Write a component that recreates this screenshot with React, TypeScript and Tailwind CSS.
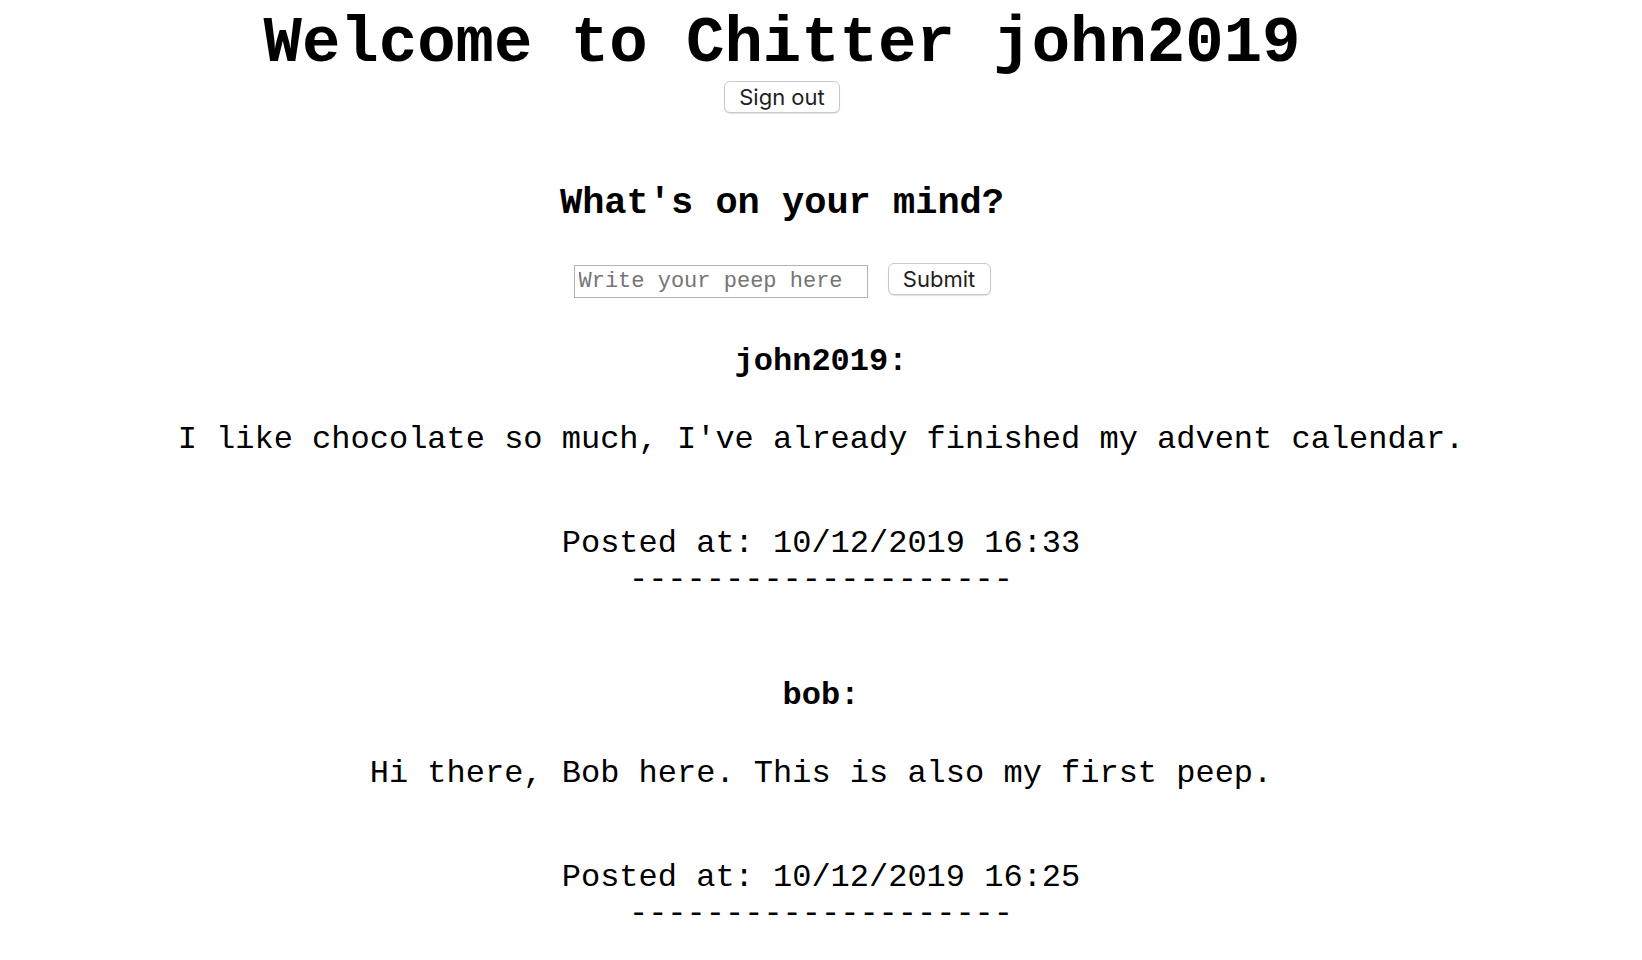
import React from "react";

type Peep = { author: string; text: string; time: string };

const peeps: Peep[] = [
  {
    author: "john2019",
    text: "I like chocolate so much, I've already finished my advent calendar.",
    time: "10/12/2019 16:33",
  },
  {
    author: "bob",
    text: "Hi there, Bob here. This is also my first peep.",
    time: "10/12/2019 16:25",
  },
];

function PeepItem({ peep, first }: { peep: Peep; first: boolean }) {
  return (
    <div className={`flex flex-col items-center ${first ? "mt-[46px]" : "mt-[80px]"}`}>
      <p className="font-bold text-[32px] leading-[36px]">{peep.author}:</p>
      <p className="mt-[42px] text-[32px] leading-[36px] whitespace-pre">{peep.text}</p>
      <p className="mt-[68px] text-[32px] leading-[36px] text-center whitespace-pre">
        Posted at: {peep.time}
        <br />
        --------------------
      </p>
    </div>
  );
}

export default function App() {
  return (
    <div className="min-h-[960px] bg-white text-black font-['Liberation_Mono','Courier_New',monospace]">
      <div className="flex flex-col items-center pr-[78px]">
        <h1 className="mt-[8px] font-bold text-[64px] leading-[72px] whitespace-pre">
          Welcome to Chitter john2019
        </h1>
        <button className="mt-[1px] w-[116px] h-[32px] flex items-center justify-center rounded-[6px] border border-[#c9c9c9] bg-white shadow-[0_1px_1px_rgba(0,0,0,0.12)] font-['Inter','Noto_Sans',sans-serif] text-[22px] text-[#1e1e1e] leading-none">
          Sign out
        </button>
        <h3 className="mt-[69px] font-bold text-[37px] leading-[42px] whitespace-pre">
          What's on your mind?
        </h3>
        <form className="mt-[39px] flex items-start gap-[20px]" onSubmit={(e) => e.preventDefault()}>
          <input
            type="text"
            placeholder="Write your peep here"
            className="mt-[2px] w-[294px] h-[33px] border border-[#b3b3b3] bg-white pl-[4px] text-[22px] placeholder:text-[#757575] outline-none font-['Liberation_Mono','Courier_New',monospace]"
          />
          <button
            type="submit"
            className="w-[103px] h-[32px] flex items-center justify-center rounded-[6px] border border-[#c9c9c9] bg-white shadow-[0_1px_1px_rgba(0,0,0,0.12)] font-['Inter','Noto_Sans',sans-serif] text-[22px] text-[#1e1e1e] leading-none"
          >
            Submit
          </button>
        </form>
      </div>
      <div className="flex flex-col items-center">
        {peeps.map((p, i) => (
          <PeepItem key={i} peep={p} first={i === 0} />
        ))}
      </div>
    </div>
  );
}
